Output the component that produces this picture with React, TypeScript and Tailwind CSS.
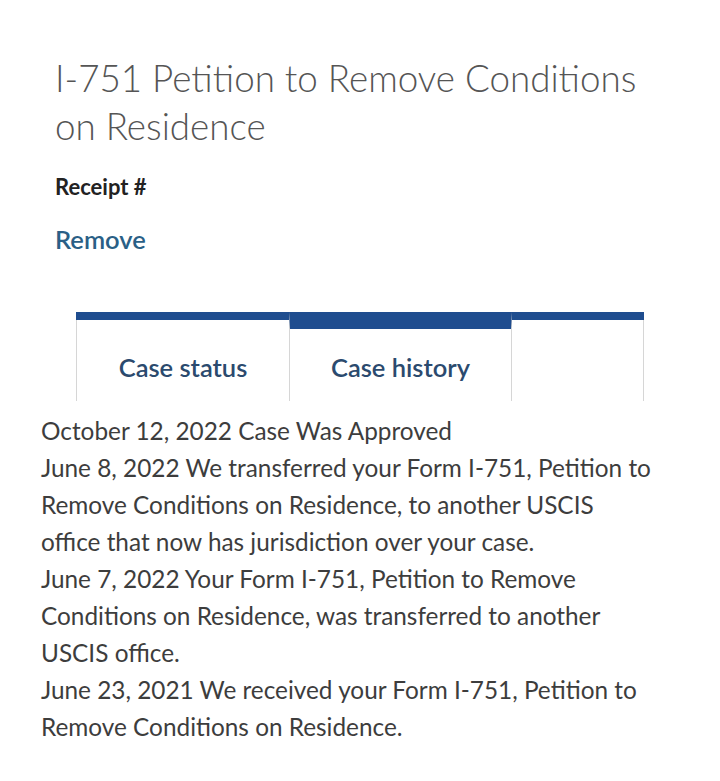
import React from 'react';

const history = [
  'October 12, 2022 Case Was Approved',
  'June 8, 2022 We transferred your Form I-751, Petition to Remove Conditions on Residence, to another USCIS office that now has jurisdiction over your case.',
  'June 7, 2022 Your Form I-751, Petition to Remove Conditions on Residence, was transferred to another USCIS office.',
  'June 23, 2021 We received your Form I-751, Petition to Remove Conditions on Residence.',
];

export default function App() {
  return (
    <div className="min-h-[781px] w-[720px] bg-white font-['Lato',sans-serif] text-[#3d3d3d]">
      <div className="px-[55px] pt-[54px]">
        <h1 className="text-[36.75px] font-light leading-[48px] text-[#555]">
          I-751 Petition to Remove Conditions on Residence
        </h1>
        <div className="mt-[20px] text-[22px] font-bold text-[#222]">Receipt #</div>
        <button className="mt-[17px] text-[25.5px] font-semibold text-[#2a5f86]">Remove</button>
      </div>

      {/* tabs */}
      <div className="mx-[76px] mt-[54px] flex h-[89px] border-t-[8px] border-[#1f4d8f]">
        <div className="flex w-[213px] items-center justify-center border-l border-[#d6d6d6] pt-[12px] text-[25.5px] font-semibold text-[#2b4a6e]">
          Case status
        </div>
        <div className="-mt-[8px] flex w-[223px] items-center justify-center border-x border-t-[17px] border-x-[#d6d6d6] border-t-[#1f4d8f] pt-[5px] pb-[1px] text-[25.5px] font-semibold text-[#2b4a6e]">
          Case history
        </div>
        <div className="flex-1 border-r border-[#d6d6d6]" />
      </div>

      <div className="w-[655px] pl-[41px] pt-[11px] text-[24.35px] leading-[37px] text-[#3d3d3d]">
        {history.map((h) => (
          <p key={h}>{h}</p>
        ))}
      </div>
    </div>
  );
}
